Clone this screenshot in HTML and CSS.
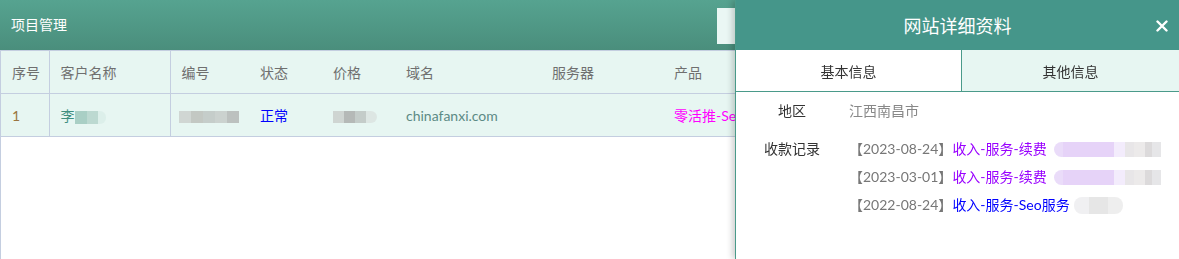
FILE: index.html
```html
<!DOCTYPE html>
<html lang="zh-CN">

<head>
    <meta charset="UTF-8">
    <title>项目管理</title>
    <link rel="stylesheet" href="styles.css">
</head>

<body>
    <div class="page">
        <header class="topbar">
            <h1>项目管理</h1>
            <div class="search"></div>
        </header>

        <main class="list">
            <table>
                <colgroup>
                    <col class="c-no">
                    <col class="c-name">
                    <col class="c-code">
                    <col class="c-state">
                    <col class="c-price">
                    <col class="c-domain">
                    <col class="c-server">
                    <col>
                </colgroup>
                <thead>
                    <tr>
                        <th class="line">序号</th>
                        <th class="line">客户名称</th>
                        <th>编号</th>
                        <th>状态</th>
                        <th>价格</th>
                        <th>域名</th>
                        <th>服务器</th>
                        <th>产品</th>
                    </tr>
                </thead>
                <tbody>
                    <tr>
                        <td class="line num">1</td>
                        <td class="line name">李<span class="blur b-name"></span></td>
                        <td><span class="blur b-code"></span></td>
                        <td class="ok">正常</td>
                        <td><span class="blur b-price"></span></td>
                        <td class="domain">chinafanxi.com</td>
                        <td></td>
                        <td class="product">零活推-Seo服务</td>
                    </tr>
                </tbody>
            </table>
        </main>
    </div>

    <aside class="panel">
        <div class="panel-head">
            <h2>网站详细资料</h2>
            <span class="close">
                <svg width="12" height="12" viewBox="0 0 12 12">
                    <path d="M1.5 1.5 L10.5 10.5 M10.5 1.5 L1.5 10.5" stroke="#fff" stroke-width="2.4" stroke-linecap="round" />
                </svg>
            </span>
        </div>

        <div class="tabs">
            <div class="tab active">基本信息</div>
            <div class="tab">其他信息</div>
        </div>

        <div class="info">
            <div class="info-row">
                <div class="label">地区</div>
                <div class="value grey">江西南昌市</div>
            </div>
            <div class="info-row">
                <div class="label">收款记录</div>
                <div class="value">
                    <div class="record">
                        <span class="date">【2023-08-24】</span><span class="purple">收入-服务-续费</span><span class="blur b-rec"></span>
                    </div>
                    <div class="record">
                        <span class="date">【2023-03-01】</span><span class="purple">收入-服务-续费</span><span class="blur b-rec"></span>
                    </div>
                    <div class="record">
                        <span class="date">【2022-08-24】</span><span class="blue">收入-服务-Seo服务</span><span class="blur b-rec3"></span>
                    </div>
                </div>
            </div>
        </div>
    </aside>
</body>

</html>
```

FILE: styles.css
```css
body {
    margin: 0;
    font-family: Lato, "Noto Sans CJK SC", sans-serif;
    font-size: 14px;
    background-color: white;
    overflow: hidden;
}

.page {
    height: 100vh;
    display: flex;
    flex-direction: column;
}

.topbar {
    height: 50px;
    flex-shrink: 0;
    display: flex;
    align-items: center;
    justify-content: space-between;
    background: linear-gradient(#56a390, #4a8e7c);
}

.topbar h1 {
    margin: 0 0 2px 11px;
    font-size: 14px;
    font-weight: normal;
    color: white;
}

.search {
    width: 200px;
    height: 36px;
    margin-right: 262px;
    margin-top: 1px;
    background-color: #eaf7f4;
}

.list {
    flex: 1;
    border-left: 1px solid #c4cee0;
}

table {
    width: 100%;
    table-layout: fixed;
    border-collapse: collapse;
    background-color: #e7f6f2;
}

.c-no { width: 48px; }
.c-name { width: 121px; }
.c-code { width: 79px; }
.c-state { width: 73px; }
.c-price { width: 73px; }
.c-domain { width: 146px; }
.c-server { width: 122px; }

th,
td {
    height: 42px;
    padding: 0 0 0 11px;
    text-align: left;
    font-weight: normal;
    white-space: nowrap;
    overflow: hidden;
    border-top: 1px solid #c4cee0;
    border-bottom: 1px solid #c4cee0;
}

th {
    color: #6f6f6f;
}

.line {
    border-right: 1px solid #c4cee0;
}

.num { color: #9a7540; }
.name { color: #3f8f7f; }
.ok { color: #0000ff; }
.domain { color: #5c8a85; }
.product { color: #ff00ff; }

.blur {
    display: inline-block;
    vertical-align: middle;
    filter: blur(0.6px);
}

.b-name {
    width: 31px;
    height: 13px;
    background: linear-gradient(90deg, #a9cfc5 0 40%, #bcd9d1 40% 75%, #dcefea 75%);
    border-radius: 0 6px 6px 0;
}

.b-code {
    width: 60px;
    height: 12px;
    margin-left: -3px;
    background: linear-gradient(90deg, #d0d6d3 0 20%, #c3c8c3 20% 40%, #c5cdca 40% 60%, #cbd2cf 60% 80%, #bcc1bf 80%);
}

.b-price {
    width: 44px;
    height: 12px;
    background: linear-gradient(90deg, #cfd5d2 0 25%, #b5b9b7 25% 50%, #c4ccc9 50% 75%, #dde6e3 75%);
    border-radius: 0 6px 6px 0;
}

.panel {
    position: fixed;
    top: 0;
    right: 0;
    width: 443px;
    height: 100%;
    background-color: white;
    border-left: 1px solid #4a9a8a;
    box-shadow: -3px 0 6px rgba(0, 0, 0, 0.18);
}

.panel-head {
    height: 50px;
    display: flex;
    align-items: center;
    justify-content: center;
    position: relative;
    background-color: #45968a;
}

.panel-head h2 {
    margin: 0 0 1px 0;
    font-size: 18px;
    font-weight: normal;
    color: white;
}

.close {
    position: absolute;
    right: 11px;
    top: 20px;
    width: 12px;
    height: 12px;
    display: flex;
}

.tabs {
    display: flex;
    height: 41px;
    border-bottom: 1px solid #4a9a8a;
}

.tab {
    flex: 1;
    display: flex;
    align-items: center;
    justify-content: center;
    color: #333;
    background-color: #e7f6f2;
}

.tab.active {
    flex: 0 0 225px;
    background-color: white;
    border-right: 1px solid #4a9a8a;
}

.info {
    padding-top: 5px;
    display: flex;
    flex-direction: column;
    gap: 10px;
}

.info-row {
    display: flex;
    line-height: 28px;
}

.label {
    width: 112px;
    text-align: center;
    color: #333;
}

.value {
    padding-left: 1px;
}

.grey { color: #888; }
.date { color: #777; }
.purple { color: #9900ff; }
.blue { color: #0000ff; }

.record {
    display: flex;
    align-items: center;
    white-space: nowrap;
}

.b-rec {
    width: 107px;
    height: 15px;
    margin-left: 7px;
    background: linear-gradient(90deg, #eadcf9 0 8%, #e6d3f8 8% 56%, #f3ecfc 56% 66%, #e8e6e8 66% 75%, #eceaea 75% 85%, #dcdadb 85% 92%, #e6e6e8 92%);
    border-radius: 8px 0 0 8px;
}

.b-rec3 {
    width: 49px;
    height: 17px;
    margin-left: 4px;
    background: linear-gradient(90deg, #f0f0f2 0 30%, #e6e6e6 30% 70%, #eeeeee 70%);
    border-radius: 8px;
}
```
